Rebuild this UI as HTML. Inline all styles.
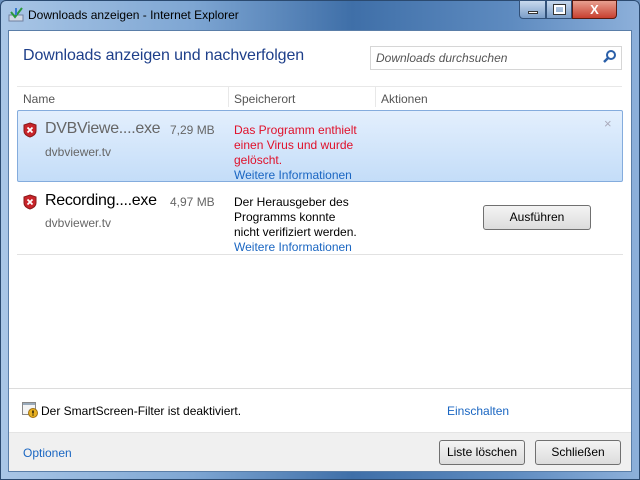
<!DOCTYPE html>
<html><head><meta charset="utf-8"><style>
*{margin:0;padding:0;box-sizing:border-box}
body{width:640px;height:480px;overflow:hidden;font-family:"Liberation Sans",sans-serif;font-size:12px;background:#6a90bd;position:relative}
.frame{position:absolute;left:0;top:0;width:640px;height:480px;border:1px solid #2b4a70;border-radius:6px 6px 0 0;background:linear-gradient(90deg,#a9c6e6 0%,#7ea6d3 30%,#3f6fa8 55%,#5e8bc0 80%,#8db0da 100%)}
.t{position:absolute;left:28px;top:8px;font-size:12px;color:#000}
.client{position:absolute;left:8px;top:30px;width:624px;height:442px;background:#fff;border:1px solid #5a7ea8}
.a{position:absolute;white-space:nowrap}
.link{color:#1a66c2}
.btn{position:absolute;border:1px solid #707070;border-radius:3px;background:linear-gradient(#f4f4f4,#dcdcdc);text-align:center;line-height:23px;font-size:12px}
</style></head><body>
<div class="frame"></div>
<svg class="a" style="left:8px;top:6px" width="16" height="16"><rect x="1" y="9" width="14" height="6" fill="#d0d8e4" stroke="#7080a0"/><path d="M3 6 L7 11 L14 2" stroke="#2a9a3a" stroke-width="2" fill="none"/><path d="M8 2v7" stroke="#3a7ad0" stroke-width="2"/></svg>
<div class="t">Downloads anzeigen - Internet Explorer</div>
<div class="a" style="left:519px;top:0;width:27px;height:19px;border:1px solid #33527a;border-radius:0 0 0 4px;background:linear-gradient(#c8d9ee,#7c9ec8)"><div style="position:absolute;left:8px;top:10px;width:10px;height:3px;background:#fff;border:1px solid #333"></div></div>
<div class="a" style="left:546px;top:0;width:26px;height:19px;border:1px solid #33527a;background:linear-gradient(#c8d9ee,#7c9ec8)"><div style="position:absolute;left:7px;top:4px;width:11px;height:9px;border:2px solid #fff;outline:1px solid #333"></div></div>
<div class="a" style="left:572px;top:0;width:45px;height:19px;border:1px solid #5a1a10;border-radius:0 0 4px 0;background:linear-gradient(#e8a090,#c84030);color:#fff;font-weight:bold;text-align:center;line-height:17px;font-size:13px">X</div>
<div class="client"></div>
<div class="a" style="left:23px;top:47px;font-size:16px;color:#1e3f8a;letter-spacing:-0.1px">Downloads anzeigen und nachverfolgen</div>
<div class="a" style="left:370px;top:46px;width:252px;height:24px;border:1px solid #d6d6d6"></div>
<div class="a" style="left:376px;top:51px;font-style:italic;color:#555">Downloads durchsuchen</div>
<svg class="a" style="left:603px;top:49px" width="14" height="14"><circle cx="8" cy="6" r="4" stroke="#2a5fa8" stroke-width="2" fill="none"/><path d="M5 9 L1 13" stroke="#2a5fa8" stroke-width="2.5"/></svg>
<div class="a" style="left:17px;top:86px;width:605px;height:20px;border-top:1px solid #e8e8e8"></div>
<div class="a" style="left:228px;top:87px;height:20px;border-left:1px solid #e8e8e8"></div>
<div class="a" style="left:375px;top:87px;height:20px;border-left:1px solid #e8e8e8"></div>
<div class="a" style="left:23px;top:92px;color:#555">Name</div>
<div class="a" style="left:234px;top:92px;color:#555">Speicherort</div>
<div class="a" style="left:381px;top:92px;color:#555">Aktionen</div>
<div class="a" style="left:17px;top:110px;width:606px;height:72px;border:1px solid #84acdd;border-radius:2px;background:linear-gradient(#e3effd,#c4ddf8)"></div>
<svg class="a" style="left:23px;top:122px" width="14" height="16"><path d="M7 1 L13 3 V9 C13 12 10 14 7 15 C4 14 1 12 1 9 V3 Z" fill="#c8242a" stroke="#8a1a1a"/><path d="M4.5 5.5 L9.5 10.5 M9.5 5.5 L4.5 10.5" stroke="#fff" stroke-width="1.8"/></svg>
<div class="a" style="left:45px;top:120px;font-size:16px;color:#666;letter-spacing:-0.3px">DVBViewe....exe</div>
<div class="a" style="left:170px;top:123px;color:#666">7,29 MB</div>
<div class="a" style="left:45px;top:145px;color:#666">dvbviewer.tv</div>
<div class="a" style="left:234px;top:123px;color:#e0102a;line-height:15px">Das Programm enthielt<br>einen Virus und wurde<br>gelöscht.</div>
<div class="a link" style="left:234px;top:168px">Weitere Informationen</div>
<div class="a" style="left:604px;top:116px;color:#aab;font-size:13px">×</div>
<svg class="a" style="left:23px;top:194px" width="14" height="16"><path d="M7 1 L13 3 V9 C13 12 10 14 7 15 C4 14 1 12 1 9 V3 Z" fill="#c8242a" stroke="#8a1a1a"/><path d="M4.5 5.5 L9.5 10.5 M9.5 5.5 L4.5 10.5" stroke="#fff" stroke-width="1.8"/></svg>
<div class="a" style="left:45px;top:192px;font-size:16px;color:#000;letter-spacing:-0.3px">Recording....exe</div>
<div class="a" style="left:170px;top:195px;color:#666">4,97 MB</div>
<div class="a" style="left:45px;top:216px;color:#666">dvbviewer.tv</div>
<div class="a" style="left:234px;top:195px;color:#000;line-height:15px">Der Herausgeber des<br>Programms konnte<br>nicht verifiziert werden.</div>
<div class="a link" style="left:234px;top:240px">Weitere Informationen</div>
<div class="btn" style="left:483px;top:205px;width:108px;height:25px">Ausführen</div>
<div class="a" style="left:17px;top:254px;width:606px;border-top:1px solid #e2e2e2"></div>
<div class="a" style="left:9px;top:388px;width:622px;border-top:1px solid #dcdcdc"></div>
<svg class="a" style="left:22px;top:402px" width="16" height="16"><rect x="0.5" y="0.5" width="13" height="12" fill="#f4f4f4" stroke="#888"/><rect x="1" y="1" width="12" height="2" fill="#9ab"/><circle cx="11" cy="11" r="4.5" fill="#e8b020" stroke="#a07010"/><path d="M11 8.5v3M11 12.5v1" stroke="#000" stroke-width="1.3"/></svg>
<div class="a" style="left:41px;top:404px">Der SmartScreen-Filter ist deaktiviert.</div>
<div class="a link" style="left:447px;top:404px">Einschalten</div>
<div class="a" style="left:9px;top:432px;width:622px;height:39px;background:#f0f0f0;border-top:1px solid #e4e4e4"></div>
<div class="a link" style="left:23px;top:446px">Optionen</div>
<div class="btn" style="left:439px;top:440px;width:86px;height:25px">Liste löschen</div>
<div class="btn" style="left:535px;top:440px;width:86px;height:25px">Schließen</div>
</body></html>
